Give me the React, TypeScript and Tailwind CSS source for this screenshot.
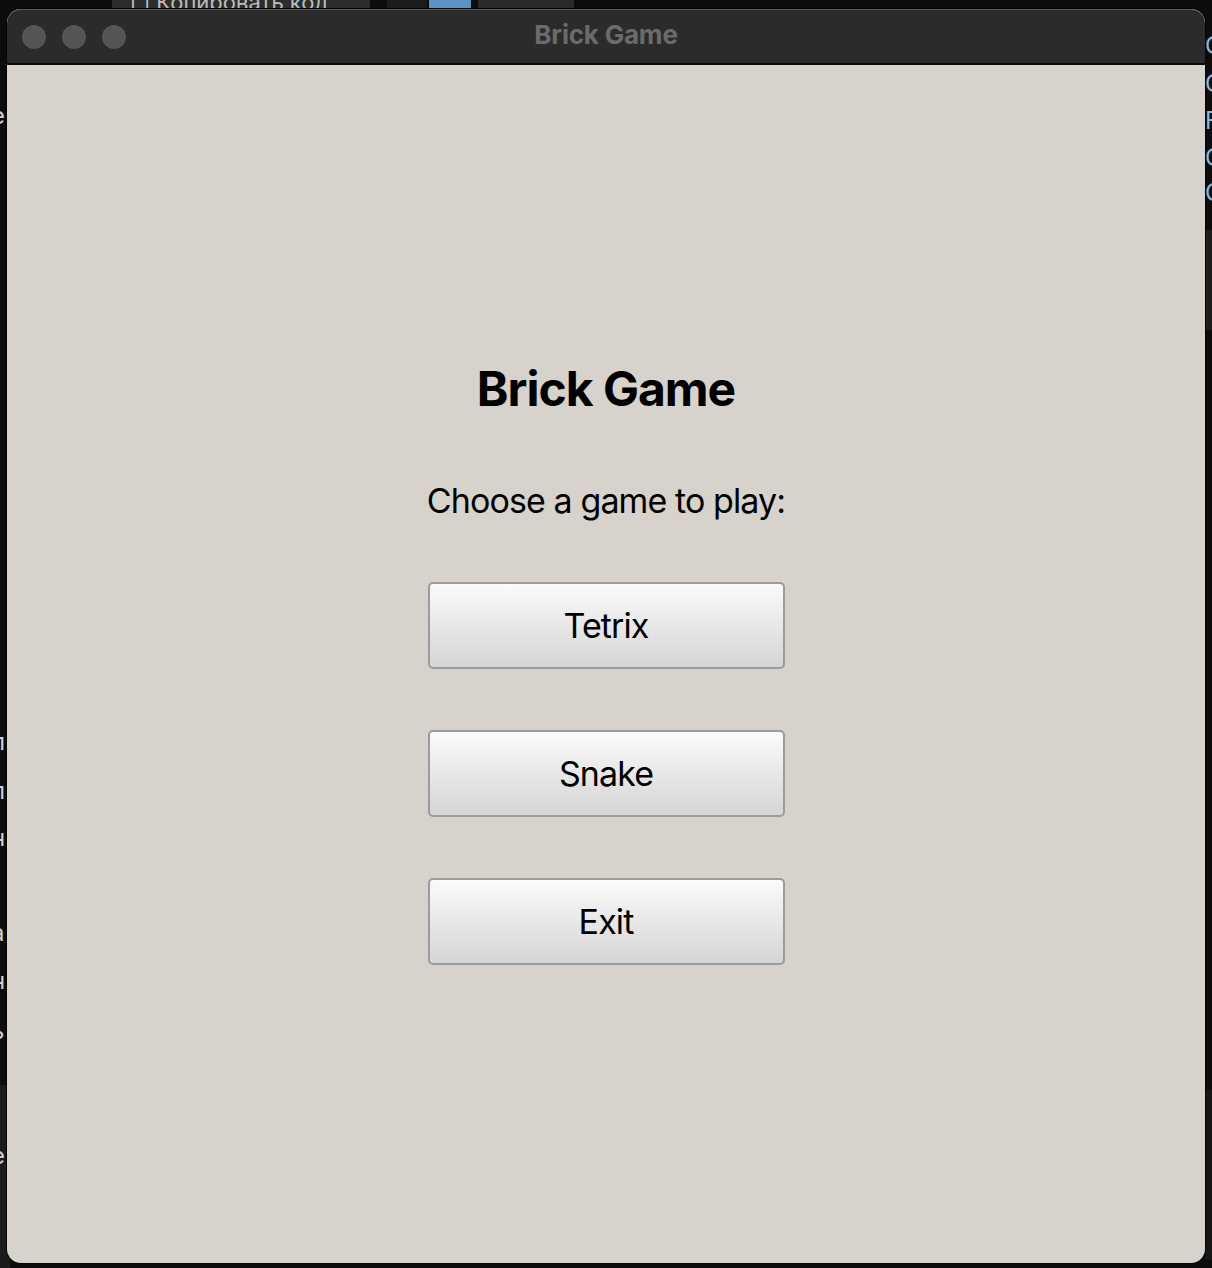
import React from 'react';

const leftBits = [
  { top: 104, ch: 'е' },
  { top: 730, ch: 'п' },
  { top: 779, ch: 'п' },
  { top: 826, ch: 'н' },
  { top: 921, ch: 'а' },
  { top: 969, ch: 'н' },
  { top: 1019, ch: 'ь' },
  { top: 1144, ch: 'е' },
];

const rightBits = [
  { top: 34, ch: 'C' },
  { top: 72, ch: 'C' },
  { top: 109, ch: 'F' },
  { top: 146, ch: 'C' },
  { top: 181, ch: 'C' },
];

const games = ['Tetrix', 'Snake', 'Exit'];

const App = () => {
  return (
    <div
      className="relative w-[1212px] h-[1268px] overflow-hidden bg-[#0c0c0c]"
      style={{ fontFamily: 'Inter, "Noto Sans", sans-serif' }}
    >
      {/* desktop behind the window */}
      <div className="absolute left-0 top-[1085px] w-[10px] h-[183px] bg-[#1b1b1b]" />
      <div className="absolute left-[112px] top-0 w-[258px] h-[9px] bg-[#2c2c2c] overflow-hidden">
        <span className="absolute left-[18px] -top-[14px] text-[22px] text-[#bdbdbd] whitespace-nowrap">□ Копировать код</span>
      </div>
      <div className="absolute left-[387px] top-0 w-[40px] h-[9px] bg-[#1c1c1c]" />
      <div className="absolute left-[429px] top-0 w-[42px] h-[9px] bg-[#5b93c4]" />
      <div className="absolute left-[478px] top-0 w-[96px] h-[9px] bg-[#2a2a2a]" />
      <div className="absolute left-[1205px] top-[230px] w-[7px] h-[100px] bg-[#1d1d1d]" />
      <div className="absolute left-[1205px] top-[1090px] w-[7px] h-[170px] bg-[#161616]" />
      {leftBits.map((b, i) => (
        <span key={i} className="absolute left-[-9px] text-[24px] leading-none text-[#d0d0d0]" style={{ top: b.top }}>
          {b.ch}
        </span>
      ))}
      {rightBits.map((b, i) => (
        <span key={i} className="absolute left-[1205px] text-[24px] leading-none text-[#8fb8de]" style={{ top: b.top }}>
          {b.ch}
        </span>
      ))}

      {/* the window */}
      <div className="absolute left-[7px] top-[9px] w-[1198px] h-[1254px] rounded-[14px] overflow-hidden flex flex-col bg-[#d7d3cc] shadow-[0_0_0_1px_#050505]">
        <div className="relative h-[56px] shrink-0 bg-[#2b2b2b] border-t border-[#575757] border-b-2 border-b-[#0a0a0a] rounded-t-[14px] flex items-center">
          <div className="flex items-center gap-[16px] pl-[15px]">
            <span className="w-[24px] h-[24px] rounded-full bg-[#555555]" />
            <span className="w-[24px] h-[24px] rounded-full bg-[#555555]" />
            <span className="w-[24px] h-[24px] rounded-full bg-[#555555]" />
          </div>
          <div className="absolute inset-0 flex items-center justify-center text-[26px] font-bold text-[#6b6b6b] pb-[5px] tracking-[-0.2px]">
            Brick Game
          </div>
        </div>

        <div className="flex-1 flex flex-col items-center pt-[300px] text-black">
          <h1 className="text-[48px] leading-none font-bold tracking-[-1px]">Brick Game</h1>
          <p className="mt-[71px] text-[34px] leading-none tracking-[-0.9px]">Choose a game to play:</p>
          <div className="mt-[64px] flex flex-col gap-[61px]">
            {games.map((g) => (
              <button
                key={g}
                className="w-[357px] h-[87px] rounded-[5px] border-2 border-[#9b9b9b] bg-gradient-to-b from-[#fbfbfb] to-[#d5d5d5] text-[34px] leading-none tracking-[-0.9px] text-black"
              >
                {g}
              </button>
            ))}
          </div>
        </div>
      </div>
    </div>
  );
};

export default App;
